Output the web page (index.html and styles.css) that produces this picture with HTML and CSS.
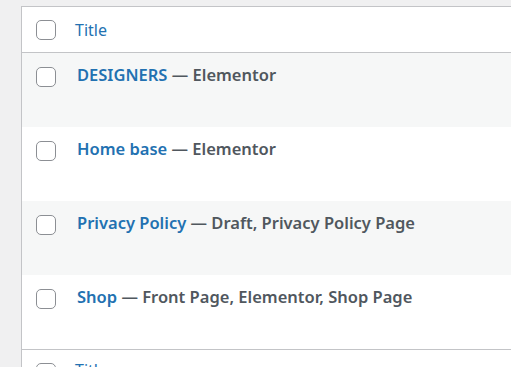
FILE: index.html
```html
<!DOCTYPE html>
<html>
<head>
<meta charset="utf-8">
<link rel="stylesheet" href="styles.css">
</head>
<body>
<div class="table">
  <div class="head">
    <span class="cb"></span>
    <span class="col-title">Title</span>
  </div>
  <div class="row alt">
    <span class="cb"></span>
    <span class="title"><a>DESIGNERS</a><span class="state"> — Elementor</span></span>
  </div>
  <div class="row">
    <span class="cb"></span>
    <span class="title"><a>Home base</a><span class="state"> — Elementor</span></span>
  </div>
  <div class="row alt">
    <span class="cb"></span>
    <span class="title"><a>Privacy Policy</a><span class="state"> — Draft, Privacy Policy Page</span></span>
  </div>
  <div class="row">
    <span class="cb"></span>
    <span class="title"><a>Shop</a><span class="state"> — Front Page, Elementor, Shop Page</span></span>
  </div>
  <div class="foot">
    <span class="cb"></span>
    <span class="col-title">Title</span>
  </div>
</div>
</body>
</html>
```
FILE: styles.css
```css
html, body {
  margin: 0;
  height: 100%;
  overflow: hidden;
}
body {
  background: #f0f0f1;
  padding: 6px 0 0 21px;
  box-sizing: border-box;
  font-family: "Noto Sans", "Open Sans", sans-serif;
}
.table {
  width: 620px;
  background: #fff;
  border: 1px solid #c3c4c7;
  border-right: none;
}
.head, .foot {
  display: flex;
  align-items: flex-start;
  height: 45px;
}
.head {
  border-bottom: 1px solid #c3c4c7;
}
.foot {
  border-top: 1px solid #c3c4c7;
}
.cb {
  flex: none;
  box-sizing: border-box;
  width: 20px;
  height: 20px;
  margin: 13px 0 0 14px;
  border: 1.25px solid #8c8f94;
  border-radius: 5px;
  background: #fff;
}
.row .cb {
  margin-top: 14px;
}
.col-title {
  margin: 12px 0 0 19px;
  font-size: 16px;
  line-height: 22px;
  color: #2271b1;
}
.foot .col-title {
  margin-top: 9px;
}
.row {
  display: flex;
  align-items: flex-start;
  height: 74px;
}
.row.alt {
  background: #f6f7f7;
}
.title {
  margin: 12px 0 0 21px;
  font-size: 16.5px;
  line-height: 20px;
  font-weight: 600;
  white-space: nowrap;
}
.title a {
  color: #2271b1;
}
.state {
  color: #50575e;
}
```
